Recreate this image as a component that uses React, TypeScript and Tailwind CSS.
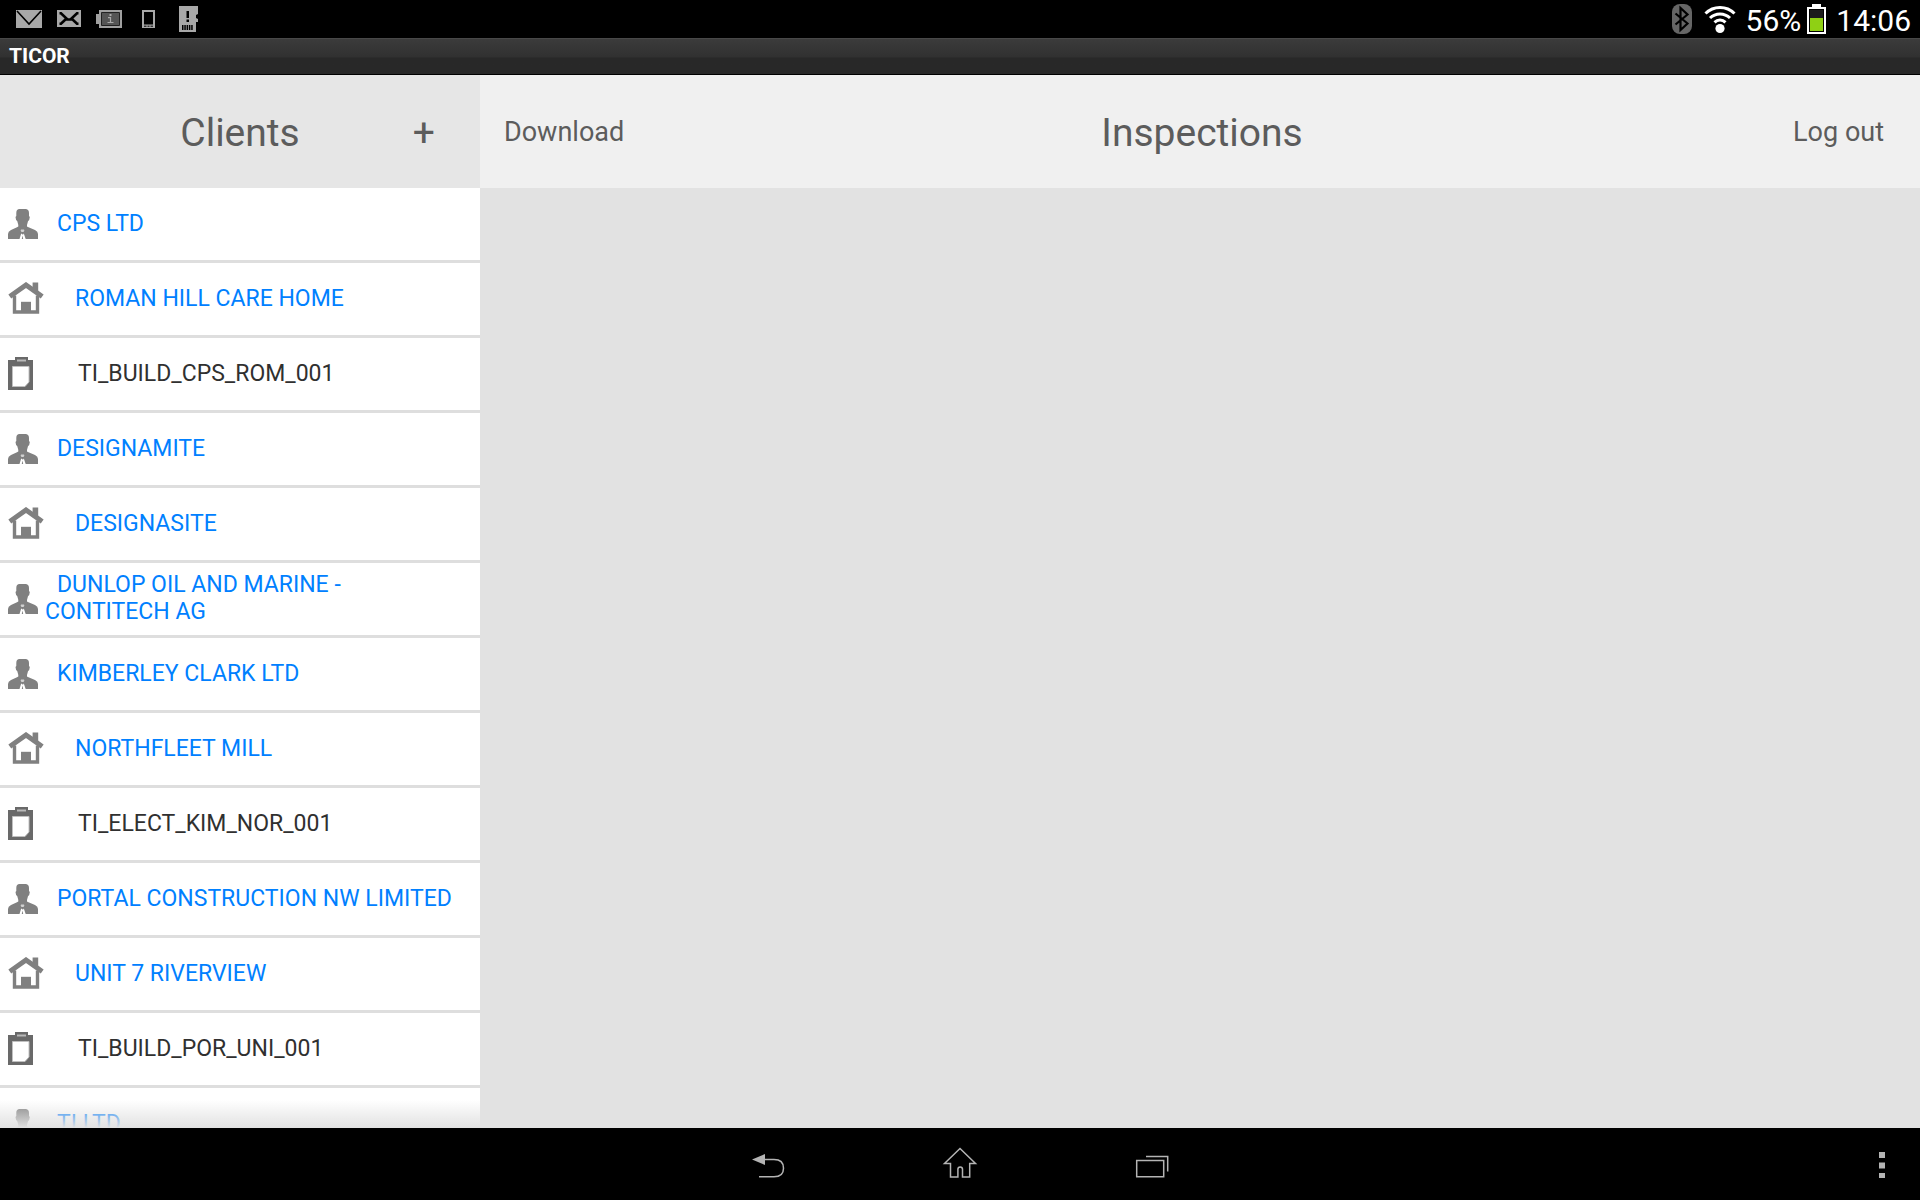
import type { ReactNode } from 'react'

type RowKind = 'client' | 'site' | 'inspection'

interface Row {
    kind: RowKind
    label: string
}

const rows: Row[] = [
    { kind: 'client', label: 'CPS LTD' },
    { kind: 'site', label: 'ROMAN HILL CARE HOME' },
    { kind: 'inspection', label: 'TI_BUILD_CPS_ROM_001' },
    { kind: 'client', label: 'DESIGNAMITE' },
    { kind: 'site', label: 'DESIGNASITE' },
    { kind: 'client', label: 'DUNLOP OIL AND MARINE - CONTITECH AG' },
    { kind: 'client', label: 'KIMBERLEY CLARK LTD' },
    { kind: 'site', label: 'NORTHFLEET MILL' },
    { kind: 'inspection', label: 'TI_ELECT_KIM_NOR_001' },
    { kind: 'client', label: 'PORTAL CONSTRUCTION NW LIMITED' },
    { kind: 'site', label: 'UNIT 7 RIVERVIEW' },
    { kind: 'inspection', label: 'TI_BUILD_POR_UNI_001' },
    { kind: 'client', label: 'TI LTD' },
]

const rowStyles: Record<RowKind, string> = {
    client: 'indent-3 text-[#0080ff]',
    site: 'indent-6 text-[#0080ff]',
    inspection: 'indent-[38px] text-[#303030]',
}

function PersonIcon() {
    return (
        <svg width="30" height="30" viewBox="0 0 30 30" className="shrink-0" aria-hidden="true">
            <path
                d="M11 0h7q3 .5 3 4v3l.8 1-.6 3-1.200 1.200-1 3.800v1.500l1.500.8 6.500 2.700q3 1.300 3 4V30H0v-5q0-2.700 3-4l6-2.700 1.300-.8V16l-1-3.800L8.100 11 7.500 8l.8-1V4Q8.200.5 11 0z"
                fill="#808080"
            />
            <path d="M13 20.500h3l.3 1.200-.8 1.300h-2l-.8-1.300z" fill="#d0d0d0" />
            <path d="M13.200 24.500L11.500 30h2.300l.6-3.500.8 3.500h2.500l-1.900-5.500-.8 1.200z" fill="#fff" />
        </svg>
    )
}

function HouseIcon() {
    return (
        <svg width="36" height="34" viewBox="0 0 36 34" className="shrink-0" aria-hidden="true">
            <path d="M6.500 13.500V30h23V13.500" fill="none" stroke="#808080" strokeWidth="3.400" />
            <path d="M1.800 14.500L18 3l16.200 11.500" fill="none" stroke="#808080" strokeWidth="5" />
            <path d="M24.600 .5h5.600v10.500l-5.600-4z" fill="#808080" />
            <path d="M13 19.800h10V30H13z" fill="#808080" />
        </svg>
    )
}

function ClipboardIcon() {
    return (
        <svg width="25" height="34" viewBox="0 0 25 34" className="shrink-0" aria-hidden="true">
            <path d="M7 0h13v3h5v30H0V3h7z" fill="#696969" />
            <path d="M9 2.500h9v2H9z" fill="#b8b8b8" />
            <path d="M4.500 9.500H21V25l-4 4.500H4.500z" fill="#fff" stroke="#c0c0c0" />
        </svg>
    )
}

const rowIcons: Record<RowKind, ReactNode> = {
    client: <PersonIcon />,
    site: <HouseIcon />,
    inspection: <ClipboardIcon />,
}

function NotificationIcons() {
    return (
        <div className="flex items-center" aria-hidden="true">
            <svg width="26" height="18" viewBox="0 0 26 18">
                <path d="M0 0h26v18H0z" fill="#a8a8a8" />
                <path d="M1 1l12 13L25 1" fill="none" stroke="#000" strokeWidth="1.600" />
            </svg>
            <svg width="24" height="18" viewBox="0 0 24 18" className="ml-[15px]">
                <path d="M0 0h24v17H0z" fill="#a8a8a8" />
                <path
                    d="M2.500 3.200H4L10.500 9.500h3L20 3.200h1.500M2.500 13.800H4L9.500 8.500M21.500 13.800H20L14.500 8.500"
                    fill="none"
                    stroke="#000"
                    strokeWidth="2.600"
                />
            </svg>
            <svg width="26" height="18" viewBox="0 0 26 18" className="ml-[15px]">
                <path d="M3 0h23v18H3v-4H0V4h3z" fill="#a0a0a0" />
                <path d="M5.500 2.500h18v13h-18z" fill="#555" stroke="#222" />
                <path d="M13.500 4h2v2h-2z" fill="#aaa" />
                <path d="M12 7.700h2.500V12.500M11.500 12.500h6" fill="none" stroke="#aaa" strokeWidth="1.200" />
            </svg>
            <svg width="13" height="18" viewBox="0 0 13 18" className="ml-5">
                <path d="M0 0h13v18H0z" fill="#a8a8a8" />
                <path d="M2 2h9v12.500H2z" />
                <path d="M2 16.200h2.500M5.500 16.200h2M8.500 16.200H11" stroke="#000" />
            </svg>
            <svg width="19" height="26" viewBox="0 0 19 26" className="ml-6">
                <path d="M0 0h19v8l-2 1v3l2 1v3h-2v10H0z" fill="#a8a8a8" />
                <path d="M7.500 5h2.500v7H7.500zM7.500 13.500h2.500V16H7.500zM3 19h1.500v5H3zM5.300 19h1.500v5H5.300zM7.600 19h1.500v5H7.600zM9.900 19h1.500v5H9.900zM12.200 19h1.500v5h-1.500z" />
            </svg>
        </div>
    )
}

function StatusBar() {
    return (
        <div className="flex h-[38px] shrink-0 items-center justify-between bg-black pr-[9px] pl-4">
            <NotificationIcons />
            <div className="flex items-center text-[30px] leading-8 text-white">
                <svg width="20" height="30" viewBox="0 0 20 30" aria-label="Bluetooth">
                    <rect width="20" height="30" rx="8" fill="#666" />
                    <path d="M3.500 9.500l12 10L8.500 26V4l7 6.500-12 10" fill="none" stroke="#000" strokeWidth="2.200" />
                </svg>
                <svg width="32" height="30" viewBox="0 0 32 30" className="ml-3" aria-label="Wi-Fi">
                    <circle cx="16" cy="24.500" r="4.600" fill="#fff" />
                    <path
                        d="M1.500 9.500a20.500 20.500 0 0 1 29 0M6 14a14.200 14.200 0 0 1 20 0M10.500 18.300a8 8 0 0 1 11 0"
                        fill="none"
                        stroke="#fff"
                        strokeWidth="3"
                    />
                </svg>
                <span className="ml-2.5 pt-1">56%</span>
                <svg width="19" height="30" viewBox="0 0 19 30" className="ml-1.5" aria-label="Battery">
                    <path d="M5 0h9v3h5v27H0V3h5z" fill="#fff" />
                    <path d="M2 5h15v23H2z" />
                    <path d="M3 6h13v8H3z" fill="#1c1c1c" />
                    <path d="M3 14h13v13H3z" fill="#8fd014" />
                </svg>
                <span className="ml-2.5 pt-1">14:06</span>
            </div>
        </div>
    )
}

function TitleBar() {
    return (
        <div className="flex h-[37px] shrink-0 items-center border-t border-b border-t-[#484848] border-b-black bg-linear-to-b from-[#3b3b3b] from-0% via-[#313131] via-50% to-[#282828] to-55% px-[9px] pb-0.5">
            <h1 className="text-[21px] leading-6 font-bold text-white">TICOR</h1>
        </div>
    )
}

function ClientList() {
    return (
        <aside className="flex w-1/4 shrink-0 flex-col">
            <header className="grid h-[113px] shrink-0 grid-cols-[1fr_auto_1fr] items-center bg-[#e6e6e6] pt-0.5 text-[#5c5c5c]">
                <h2 className="col-start-2 text-[39px] leading-12">Clients</h2>
                <button type="button" aria-label="Add client" className="mr-[45px] justify-self-end text-[39px] leading-12">
                    +
                </button>
            </header>
            <div className="relative min-h-0 flex-1 overflow-hidden bg-white">
                <ul>
                    {rows.map((row) => (
                        <li key={row.label} className="border-b-3 border-[#dedede]">
                            <a
                                href="#"
                                className={`flex h-[72px] items-center gap-[7px] pr-4 pl-2 text-[23px] leading-[27px] ${rowStyles[row.kind]}`}
                            >
                                {rowIcons[row.kind]}
                                <span className="pb-0.5">{row.label}</span>
                            </a>
                        </li>
                    ))}
                </ul>
                {/* scroll edge fade */}
                <div className="pointer-events-none absolute inset-x-0 bottom-0 h-7 bg-linear-to-b from-transparent to-[#e2e2e2]" />
            </div>
        </aside>
    )
}

function Inspections() {
    return (
        <main className="flex min-w-0 flex-1 flex-col bg-[#e2e2e2]">
            <header className="grid h-[113px] shrink-0 grid-cols-[1fr_auto_1fr] items-center bg-[#f0f0f0] pr-5 pl-6 text-[27px] leading-8 text-[#5c5c5c]">
                <button type="button" className="justify-self-start">Download</button>
                <h2 className="pt-0.5 text-[39px] leading-12">Inspections</h2>
                <button type="button" className="mr-4 justify-self-end">Log out</button>
            </header>
        </main>
    )
}

function NavBar() {
    return (
        <nav className="grid h-[72px] shrink-0 grid-cols-[1fr_auto_1fr] items-center bg-black">
            <div className="col-start-2 flex">
                <button type="button" aria-label="Back" className="flex w-48 justify-center">
                    <svg width="36" height="36" viewBox="0 -1 36 36" fill="none" stroke="#b4b4b4">
                        <path d="M14 12.500h10c6 0 9.500 3 9.500 8.700s-3.500 8.600-9.500 8.600H9" strokeWidth="1.500" />
                        <path d="M2 12.500L15 7v11z" fill="#b4b4b4" stroke="none" />
                    </svg>
                </button>
                <button type="button" aria-label="Home" className="flex w-48 justify-center">
                    <svg width="36" height="36" viewBox="0 -1 36 36" fill="none" stroke="#b4b4b4">
                        <path
                            d="M18 1.500L33.500 16.500H27.700V30h-7.200v-7.700q0-2.300-2.300-2.300t-2.300 2.300V30H8.500V16.500H2.500z"
                            strokeWidth="1.500"
                        />
                    </svg>
                </button>
                <button type="button" aria-label="Recent apps" className="flex w-48 justify-center">
                    <svg width="36" height="36" viewBox="0 -1 36 36" fill="none" stroke="#b4b4b4">
                        <path d="M2.700 13.500h27v16.300h-27zM12 9.500h21.700v15" strokeWidth="1.500" />
                    </svg>
                </button>
            </div>
            <button type="button" aria-label="More options" className="mr-8 justify-self-end">
                <svg width="12" height="28" viewBox="0 0 12 28" fill="#b4b4b4">
                    <path d="M3 2h6v6H3zM3 12.500h6v6H3zM3 23h6v5H3z" />
                </svg>
            </button>
        </nav>
    )
}

export default function App() {
    return (
        <div className="flex h-screen flex-col overflow-hidden font-['Roboto',sans-serif]">
            <StatusBar />
            <TitleBar />
            <div className="flex min-h-0 flex-1">
                <ClientList />
                <Inspections />
            </div>
            <NavBar />
        </div>
    )
}
